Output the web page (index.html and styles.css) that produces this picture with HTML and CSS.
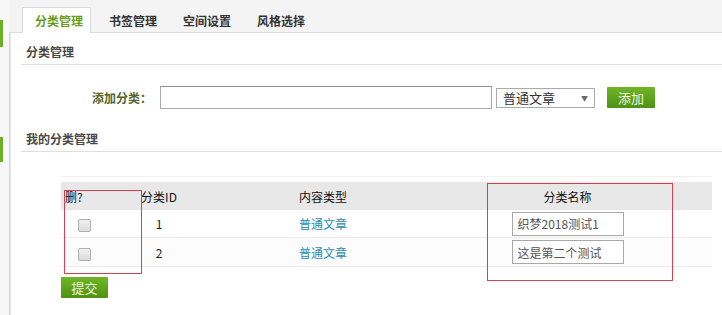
FILE: index.html
```html
<!DOCTYPE html>
<html>
<head>
  <title>分类管理</title>
  <meta charset="utf-8">
  <link rel="stylesheet" href="styles.css">
</head>
<body>
  <div class="page">
    <div class="side">
      <div class="side-mark first"></div>
      <div class="side-mark second"></div>
    </div>

    <div class="main">
      <div class="tabs">
        <span class="tab active">分类管理</span>
        <span class="tab">书签管理</span>
        <span class="tab">空间设置</span>
        <span class="tab">风格选择</span>
      </div>

      <div class="panel">
        <h3 class="title">分类管理</h3>

        <div class="add-row">
          <label class="add-label">添加分类：</label>
          <input type="text" class="add-input">
          <div class="select">
            <span>普通文章</span>
            <span class="arrow">▼</span>
          </div>
          <button class="btn">添加</button>
        </div>

        <h3 class="title second">我的分类管理</h3>

        <div class="table-wrap">
          <table class="list">
            <tr class="head">
              <th class="c-del">删?</th>
              <th class="c-id">分类ID</th>
              <th class="c-type">内容类型</th>
              <th class="c-name">分类名称</th>
            </tr>
            <tr>
              <td class="c-del"><input type="checkbox" class="check"></td>
              <td class="c-id">1</td>
              <td class="c-type"><a href="#">普通文章</a></td>
              <td class="c-name"><input type="text" class="name-input" value="织梦2018测试1"></td>
            </tr>
            <tr class="alt">
              <td class="c-del"><input type="checkbox" class="check"></td>
              <td class="c-id">2</td>
              <td class="c-type"><a href="#">普通文章</a></td>
              <td class="c-name"><input type="text" class="name-input" value="这是第二个测试"></td>
            </tr>
          </table>

          <!-- red marks drawn over the table -->
          <div class="mark mark-del"></div>
          <div class="mark mark-name"></div>
        </div>

        <button class="btn submit">提交</button>
      </div>
    </div>
  </div>
</body>
</html>
```

FILE: styles.css
```css
body {
  margin: 0;
  background: #fff;
  color: #333;
  font-family: "Noto Sans CJK SC", "Liberation Sans", sans-serif;
  font-size: 12px;
}

.page {
  display: flex;
  height: 315px;
  overflow: hidden;
}

.side {
  width: 9px;
  flex-shrink: 0;
  background: #f7f7f7;
  border-right: 1px solid #d8d8d8;
}

.side-mark {
  width: 3px;
  background: #6cae2a;
}

.side-mark.first {
  margin-top: 20px;
  height: 27px;
}

.side-mark.second {
  margin-top: 90px;
  height: 25px;
}

.main {
  flex: 1;
  display: flex;
  flex-direction: column;
}

.tabs {
  height: 32px;
  background: #f4f4f4;
  border-bottom: 1px solid #dcdcdc;
  padding-left: 13px;
  display: flex;
  align-items: flex-end;
  margin-left: -1px;
}

.tab {
  width: 74px;
  padding-left: 12px;
  box-sizing: border-box;
  line-height: 25px;
  font-weight: bold;
  color: #333;
  margin-bottom: -1px;
  border: 1px solid transparent;
  border-bottom: none;
}

.tab.active {
  width: 69px;
  margin-right: 5px;
  background: #fff;
  border-color: #dcdcdc;
  color: #6a9c1c;
  height: 26px;
  line-height: 26px;
}

.panel {
  flex: 1;
  border-left: 1px solid #e3e3e3;
  padding-left: 10px;
}

.title {
  margin: 0;
  padding: 10px 5px 3px;
  line-height: 18px;
  font-size: 12px;
  font-weight: bold;
  color: #4a4a44;
  border-bottom: 1px solid #dedede;
}

.title.second {
  margin-top: 11px;
}

.add-row {
  display: flex;
  align-items: center;
  margin-top: 21px;
  height: 23px;
}

.add-label {
  width: 131px;
  text-align: right;
  margin-right: 8px;
  font-weight: bold;
  color: #53652c;
}

.add-input {
  width: 332px;
  height: 23px;
  box-sizing: border-box;
  border: 1px solid #a9a9a9;
  border-top-color: #8f8f8f;
  margin: 0;
}

.select {
  width: 99px;
  height: 20px;
  box-sizing: border-box;
  margin-left: 4px;
  border: 1px solid #aaa;
  display: flex;
  align-items: center;
  justify-content: space-between;
  padding: 0 6px;
  font-size: 13px;
  color: #333;
}

.select .arrow {
  font-size: 7px;
  color: #666;
}

.btn {
  margin-left: 12px;
  width: 48px;
  height: 21px;
  border: none;
  border-radius: 1px;
  background: linear-gradient(#70b526, #4e9214);
  color: #eef6e0;
  font-family: inherit;
  font-size: 13px;
  padding: 0;
  line-height: 21px;
}

.table-wrap {
  position: relative;
  margin: 24px 0 0 40px;
  width: 651px;
  border-top: 1px solid #f0f0f0;
  padding-top: 5px;
}

.list {
  width: 100%;
  border-collapse: collapse;
  table-layout: fixed;
}

.list th {
  height: 28px;
  background: #e8e8e8;
  font-weight: normal;
  color: #111;
  padding: 0;
}

.list td {
  height: 27px;
  border-bottom: 1px solid #ececec;
  text-align: center;
  padding: 0;
  color: #222;
}

.list tr.alt td {
  height: 28px;
  background: #fcfcfc;
}

.list .c-del {
  width: 42px;
}

th.c-del {
  text-align: left;
  padding-left: 4px;
}

.list .c-id {
  width: 104px;
}

.list .c-type {
  width: 224px;
}

.list .c-name {
  padding-right: 12px;
}

.list a {
  color: #2a8db0;
  text-decoration: none;
}

.check {
  appearance: none;
  width: 13px;
  height: 13px;
  margin: 0;
  vertical-align: middle;
  border: 1px solid #b0b0b0;
  border-radius: 2px;
  background: linear-gradient(#f0f0f0, #dcdcdc);
}

.name-input {
  width: 112px;
  height: 24px;
  box-sizing: border-box;
  border: 1px solid #a8a8a8;
  padding: 0 5px;
  font-family: inherit;
  font-size: 12px;
  color: #555;
  vertical-align: middle;
}

.mark {
  position: absolute;
  border: 1px solid #d6404c;
}

.mark-del {
  left: 3px;
  top: 13px;
  width: 76px;
  height: 82px;
}

.mark-name {
  left: 426px;
  top: 6px;
  width: 184px;
  height: 96px;
}

.submit {
  display: block;
  margin: 10px 0 0 40px;
  width: 47px;
}
```
